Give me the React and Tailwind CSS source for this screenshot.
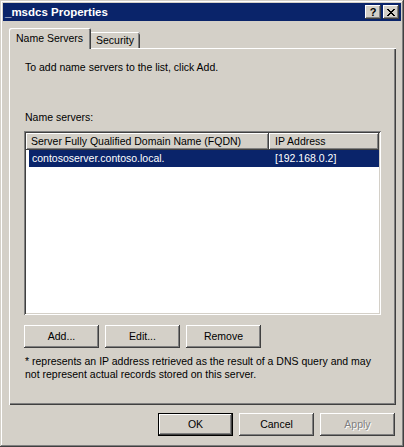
import { useState } from "react";

const FONT = { fontFamily: '"Liberation Sans", Arial, sans-serif' };

// classic 3D raised button
const Button = ({ children, isDefault, disabled }) => {
  return (
    <button
      type="button"
      className={
        "w-[75px] h-[23px] bg-[#d4d0c8] text-[10.5px] leading-[13px] flex items-center justify-center " +
        (isDefault
          ? "border border-black shadow-[inset_-1px_-1px_#404040,inset_1px_1px_#ffffff,inset_-2px_-2px_#808080]"
          : "shadow-[inset_-1px_-1px_#404040,inset_1px_1px_#ffffff,inset_-2px_-2px_#808080]") +
        (disabled ? " text-[#808080] [text-shadow:1px_1px_0_#ffffff]" : " text-black")
      }
    >
      {children}
    </button>
  );
};

const CloseGlyph = () => (
  <svg width="8" height="7" viewBox="0 0 8 7" shapeRendering="crispEdges">
    <path
      fill="#000"
      d="M0 0h2v1H0z M6 0h2v1H6z M1 1h2v1H1z M5 1h2v1H5z M2 2h4v1H2z M3 3h2v1H3z M2 4h4v1H2z M1 5h2v1H1z M5 5h2v1H5z M0 6h2v1H0z M6 6h2v1H6z"
    />
  </svg>
);

const TitleButton = ({ children }) => (
  <div className="w-[16px] h-[14px] bg-[#d4d0c8] flex items-center justify-center shadow-[inset_-1px_-1px_#404040,inset_1px_1px_#ffffff,inset_-2px_-2px_#808080]">
    {children}
  </div>
);

export default function App() {
  const [tab] = useState("names");

  return (
    <div
      style={FONT}
      className="w-[404px] h-[447px] bg-[#d4d0c8] p-[3px] flex flex-col shadow-[inset_-1px_-1px_#404040,inset_1px_1px_#d4d0c8,inset_-2px_-2px_#808080,inset_2px_2px_#ffffff] text-black"
    >
      {/* Title bar */}
      <div className="h-[18px] bg-[#0a246a] flex items-center justify-between pl-[2px] pr-[2px]">
        <span className="text-white font-bold text-[11.5px] leading-[18px]">_msdcs Properties</span>
        <div className="flex gap-[2px]">
          <TitleButton>
            <span className="font-bold text-[11px] leading-[11px] pt-[1px]">?</span>
          </TitleButton>
          <TitleButton>
            <CloseGlyph />
          </TitleButton>
        </div>
      </div>

      <div className="pl-[6px] mt-[7px] flex flex-col">
        {/* Tabs */}
        <div className="flex items-end h-[20px]">
          <div
            className={
              "relative z-10 -mb-px h-[21px] w-[82px] bg-[#d4d0c8] pl-[7px] pt-[4px] text-[10.5px] leading-[13px] rounded-t-[2px] shadow-[inset_1px_1px_#ffffff,inset_-1px_0_#404040,inset_-2px_0_#808080] " +
              (tab === "names" ? "" : "")
            }
          >
            Name Servers
          </div>
          <div className="h-[16px] w-[49px] pl-[5px] pt-[2px] text-[10.5px] leading-[13px] rounded-tr-[2px] shadow-[inset_0_1px_#ffffff,inset_-1px_0_#404040,inset_-2px_0_#808080]">
            Security
          </div>
        </div>

        {/* Tab panel */}
        <div className="w-[387px] h-[357px] pl-[15px] pt-[13px] shadow-[inset_1px_1px_#ffffff,inset_-1px_-1px_#404040,inset_-2px_-2px_#808080] text-[10.5px] leading-[13px]">
          <p className="pl-[1px]">To add name servers to the list, click Add.</p>
          <p className="mt-[37px] pl-[1px]">Name servers:</p>

          {/* List view */}
          <div className="mt-[7px] w-[357px] h-[184px] bg-white p-[2px] shadow-[inset_1px_1px_#808080,inset_-1px_-1px_#ffffff,inset_2px_2px_#404040,inset_-2px_-2px_#d4d0c8]">
            <div className="flex h-[17px] bg-[#d4d0c8] leading-[17px]">
              <div className="w-[243px] pl-[5px] shadow-[inset_-1px_-1px_#404040,inset_1px_1px_#ffffff,inset_-2px_-2px_#808080]">
                Server Fully Qualified Domain Name (FQDN)
              </div>
              <div className="w-[110px] pl-[6px] shadow-[inset_-1px_-1px_#404040,inset_1px_1px_#ffffff,inset_-2px_-2px_#808080]">
                IP Address
              </div>
            </div>
            <div className="ml-[3px] w-[350px] h-[17px] bg-[#0a246a] text-white flex leading-[17px]">
              <div className="w-[240px] pl-[3px]">contososerver.contoso.local.</div>
              <div className="pl-[6px]">[192.168.0.2]</div>
            </div>
          </div>

          <div className="mt-[10px] flex gap-[6px]">
            <Button>Add...</Button>
            <Button>Edit...</Button>
            <Button>Remove</Button>
          </div>

          <div className="mt-[7px] pl-[1px]">
            <p>* represents an IP address retrieved as the result of a DNS query and may</p>
            <p>not represent actual records stored on this server.</p>
          </div>
        </div>

        {/* Dialog buttons */}
        <div className="w-[387px] mt-[8px] pr-[1px] flex justify-end gap-[6px]">
          <Button isDefault>OK</Button>
          <Button>Cancel</Button>
          <Button disabled>Apply</Button>
        </div>
      </div>
    </div>
  );
}
